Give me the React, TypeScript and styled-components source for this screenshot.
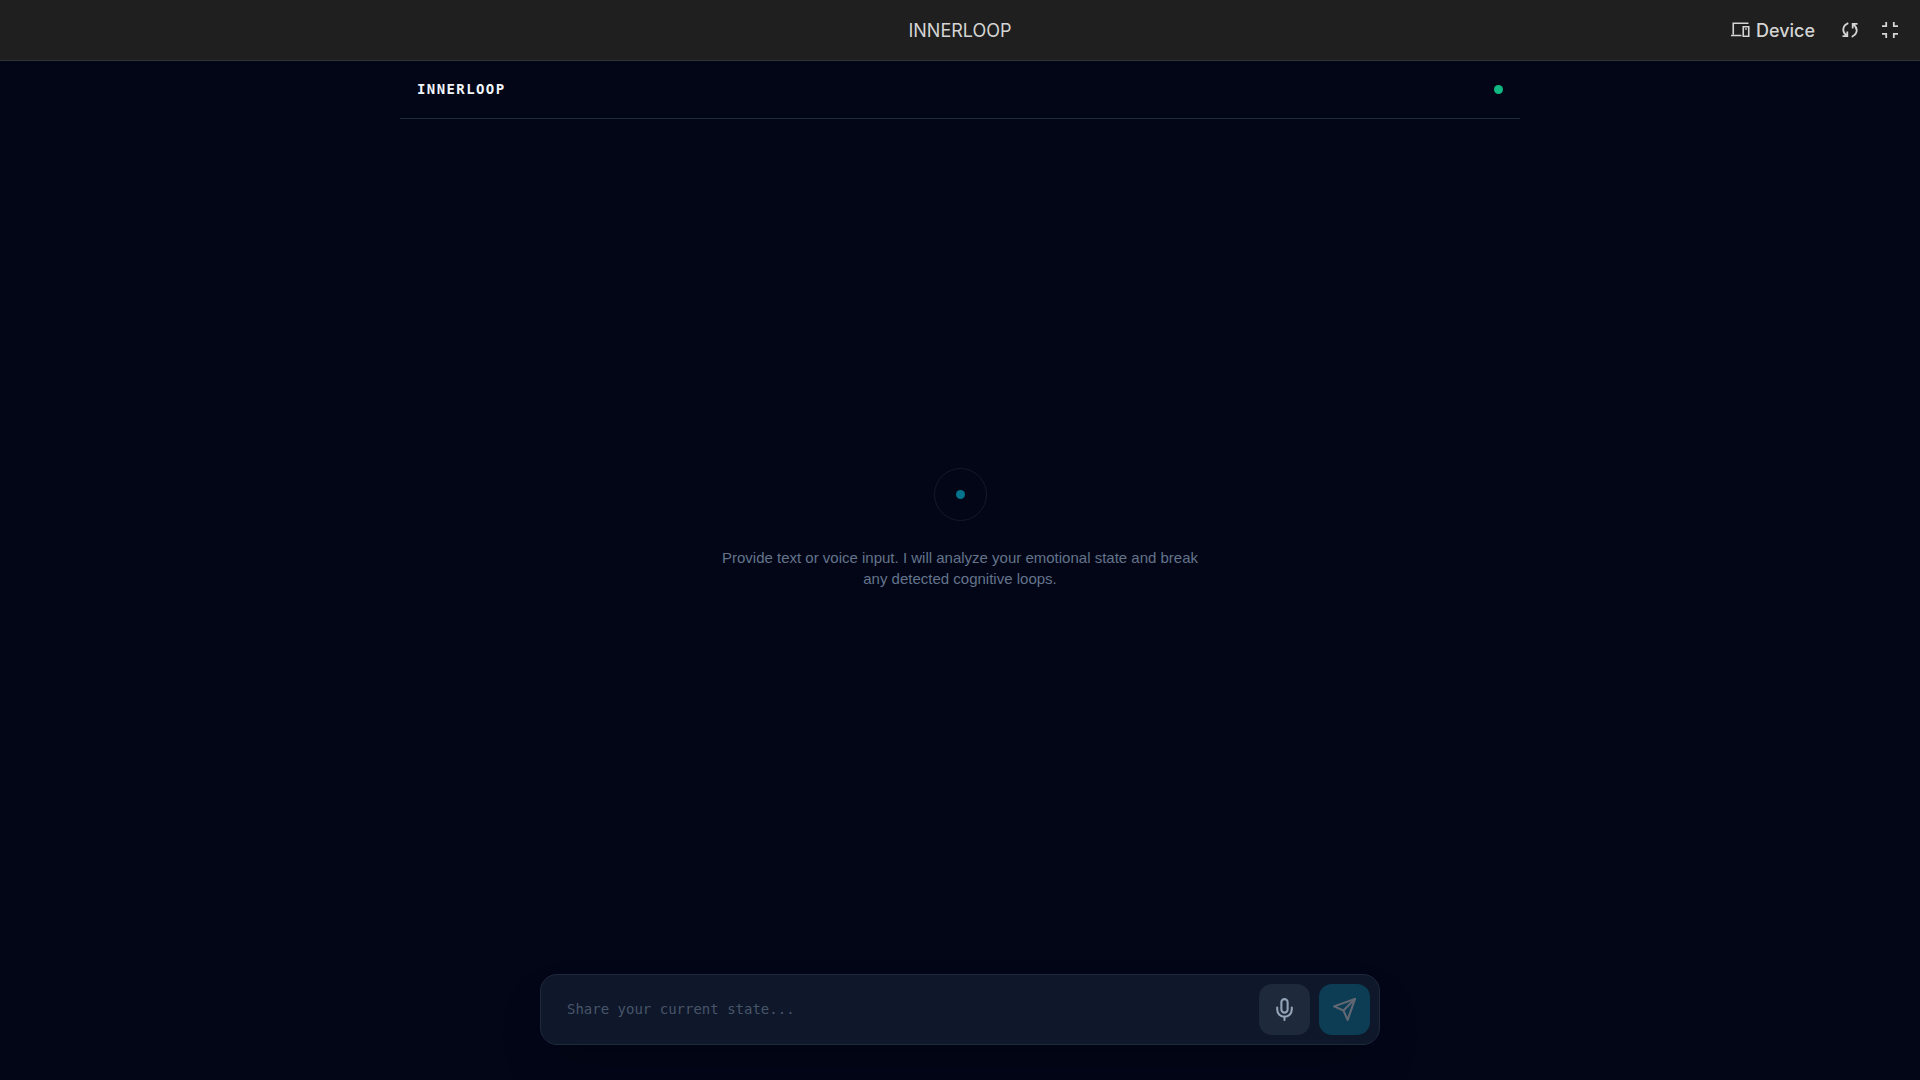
import React, { useState } from "react";
import styled, { createGlobalStyle } from "styled-components";
import { Mic } from "lucide-react";

const GlobalStyle = createGlobalStyle`
  *, *::before, *::after { box-sizing: border-box; }
  body {
    margin: 0;
    background: #020617;
    font-family: "Liberation Sans", Arial, sans-serif;
  }
`;

const Page = styled.div`
  min-height: 100vh;
  display: flex;
  flex-direction: column;
`;

const TopBar = styled.header`
  display: grid;
  grid-template-columns: 1fr auto 1fr;
  align-items: center;
  height: 61px;
  padding: 0 22px;
  background: #1f1f1f;
  border-bottom: 1px solid #333333;
  color: #d4d4d4;
  font-family: Inter, sans-serif;
  font-size: 18px;
  line-height: 25px;
`;

const TopTitle = styled.span`
  grid-column: 2;
`;

const TopActions = styled.div`
  display: flex;
  justify-content: flex-end;
  align-items: center;
  gap: 24px;
`;

const TopButton = styled.button<{ $labelled?: boolean }>`
  display: flex;
  align-items: center;
  gap: 4px;
  padding: ${(p) => (p.$labelled ? "0 3px" : "0")};
  border: 0;
  background: none;
  color: #d4d4d4;
  font: 500 18px/25px Inter, sans-serif;
  cursor: pointer;

  svg { display: block; }
`;

const Main = styled.main`
  flex: 1;
  display: flex;
  flex-direction: column;
  width: 100%;
  max-width: 1120px;
  margin: 0 auto;
`;

const AppHeader = styled.div`
  display: flex;
  justify-content: space-between;
  align-items: center;
  height: 58px;
  padding: 0 17px;
  border-bottom: 1px solid #1e293b;
`;

const Brand = styled.h1`
  margin: 0;
  color: #f1f5f9;
  font: 700 14px/23px "DejaVu Sans Mono", monospace;
  letter-spacing: 0.1em;
`;

const Dot = styled.span<{ $color: string }>`
  width: 9px;
  height: 9px;
  border-radius: 50%;
  background: ${(p) => p.$color};
`;

const Empty = styled.section`
  flex: 1;
  display: flex;
  flex-direction: column;
  align-items: center;
  justify-content: center;
  gap: 26px;
  padding-bottom: 36px;
`;

const Ring = styled.div`
  display: grid;
  place-items: center;
  width: 53px;
  height: 53px;
  border: 1px solid #131b2b;
  border-radius: 50%;
`;

const Hint = styled.p`
  max-width: 490px;
  margin: 0;
  color: #64748b;
  font-size: 15px;
  line-height: 21px;
  text-align: center;
`;

const Composer = styled.form`
  display: flex;
  align-items: center;
  gap: 9px;
  width: 100%;
  max-width: 840px;
  margin: 0 auto 35px;
  padding: 9px;
  border: 1px solid #1e293b;
  border-radius: 17px;
  background: #0f172a;
  box-shadow: 0 25px 50px -12px rgba(0, 0, 0, 0.25);
`;

const Field = styled.input`
  flex: 1;
  min-width: 0;
  padding: 0 17px;
  border: 0;
  outline: 0;
  background: none;
  color: #e2e8f0;
  font: 14px/23px "DejaVu Sans Mono", monospace;

  &::placeholder { color: #475569; opacity: 1; }
`;

const ActionButton = styled.button<{ $bg: string; $fg: string }>`
  display: grid;
  place-items: center;
  width: 51px;
  height: 51px;
  padding: 0;
  border: 0;
  border-radius: 13px;
  background: ${(p) => p.$bg};
  color: ${(p) => p.$fg};
`;

const DeviceIcon = () => (
  <svg width="22" height="22" viewBox="0 0 22 22" fill="none" stroke="currentColor" strokeWidth="1.6" aria-hidden="true">
    <path d="M18.5 4.25H3.25V15.5M1 16.5H11.5" />
    <path d="M13.25 7.75H18.75V17.25H13.25Z" />
    <path d="M15.2 10H16.8" />
  </svg>
);

const RefreshIcon = () => (
  <svg width="16" height="16" viewBox="0 0 16 16" fill="none" stroke="currentColor" strokeWidth="1.8" aria-hidden="true">
    <path d="M6.3 1.2C0.5 3.6 -0.5 9.5 4.6 13.6M0.5 14.2H5.3V9.4" />
    <path d="M9.7 14.8C15.5 12.4 16.5 6.5 11.4 2.4M15.5 1.8H10.7V6.6" />
  </svg>
);

const CollapseIcon = () => (
  <svg width="16" height="16" viewBox="0 0 16 16" fill="none" stroke="currentColor" strokeWidth="1.8" aria-hidden="true">
    <path d="M0 4.2H4.2V0M11.8 0V4.2H16M0 11.8H4.2V16M16 11.8H11.8V16" />
  </svg>
);

const SendIcon = () => (
  <svg width="25" height="25" viewBox="0 0 24 24" fill="none" stroke="currentColor" strokeWidth="2" strokeLinecap="round" strokeLinejoin="round" aria-hidden="true">
    <path d="m22 2-7 20-4-9-9-4Z" />
    <path d="M22 2 11 13" />
  </svg>
);

export default function App() {
  const [text, setText] = useState("");
  return (
    <Page>
      <GlobalStyle />
      <TopBar>
        <TopTitle>INNERLOOP</TopTitle>
        <TopActions>
          <TopButton type="button" $labelled><DeviceIcon />Device</TopButton>
          <TopButton type="button" aria-label="Reload"><RefreshIcon /></TopButton>
          <TopButton type="button" aria-label="Exit full screen"><CollapseIcon /></TopButton>
        </TopActions>
      </TopBar>
      <Main>
        <AppHeader>
          <Brand>INNERLOOP</Brand>
          <Dot $color="#10b981" />
        </AppHeader>
        <Empty>
          <Ring><Dot $color="#04738c" /></Ring>
          <Hint>
            Provide text or voice input. I will analyze your emotional state and break any detected cognitive loops.
          </Hint>
        </Empty>
        <Composer onSubmit={(e: React.FormEvent) => e.preventDefault()}>
          <Field
            aria-label="Your current state"
            placeholder="Share your current state..."
            value={text}
            onChange={(e: React.ChangeEvent<HTMLInputElement>) => setText(e.target.value)}
          />
          <ActionButton type="button" aria-label="Record voice" $bg="#1e293b" $fg="#94a3b8">
            <Mic size={25} />
          </ActionButton>
          <ActionButton type="submit" aria-label="Send" disabled={!text} $bg="#0c3d55" $fg="#626872">
            <SendIcon />
          </ActionButton>
        </Composer>
      </Main>
    </Page>
  );
}
